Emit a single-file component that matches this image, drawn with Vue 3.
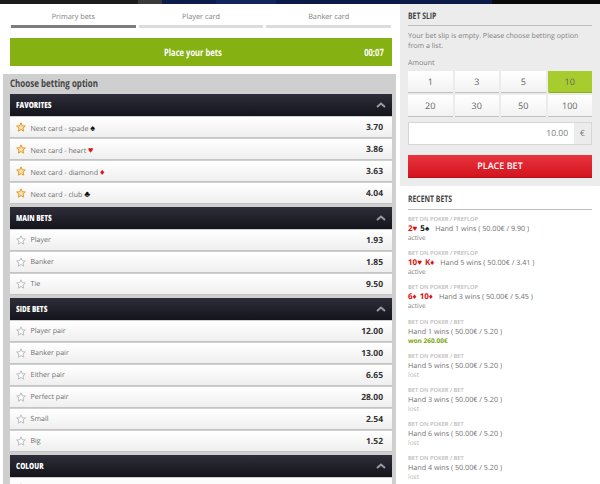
<script setup>
const tabs = ['Primary bets', 'Player card', 'Banker card']

const groups = [
  {
    title: 'FAVORITES',
    fav: true,
    rows: [
      { label: 'Next card - spade', suit: '♠', red: false, odd: '3.70' },
      { label: 'Next card - heart', suit: '♥', red: true, odd: '3.86' },
      { label: 'Next card - diamond', suit: '♦', red: true, odd: '3.63' },
      { label: 'Next card - club', suit: '♣', red: false, odd: '4.04' }
    ]
  },
  {
    title: 'MAIN BETS',
    rows: [
      { label: 'Player', odd: '1.93' },
      { label: 'Banker', odd: '1.85' },
      { label: 'Tie', odd: '9.50' }
    ]
  },
  {
    title: 'SIDE BETS',
    rows: [
      { label: 'Player pair', odd: '12.00' },
      { label: 'Banker pair', odd: '13.00' },
      { label: 'Either pair', odd: '6.65' },
      { label: 'Perfect pair', odd: '28.00' },
      { label: 'Small', odd: '2.54' },
      { label: 'Big', odd: '1.52' }
    ]
  },
  { title: 'COLOUR', rows: [{}] }
]

const amounts = [1, 3, 5, 10, 20, 30, 50, 100]

const recent = [
  { type: 'BET ON POKER / PREFLOP', cards: [['2♥', true], ['5♠', false]], text: 'Hand 1 wins ( 50.00€ / 9.90 )', status: 'active' },
  { type: 'BET ON POKER / PREFLOP', cards: [['10♥', true], ['K♦', true]], text: 'Hand 5 wins ( 50.00€ / 3.41 )', status: 'active' },
  { type: 'BET ON POKER / PREFLOP', cards: [['6♦', true], ['10♦', true]], text: 'Hand 3 wins ( 50.00€ / 5.45 )', status: 'active' },
  { type: 'BET ON POKER / BET', cards: [], text: 'Hand 1 wins ( 50.00€ / 5.20 )', status: 'won 260.00€' },
  { type: 'BET ON POKER / BET', cards: [], text: 'Hand 5 wins ( 50.00€ / 5.20 )', status: 'lost' },
  { type: 'BET ON POKER / BET', cards: [], text: 'Hand 3 wins ( 50.00€ / 5.20 )', status: 'lost' },
  { type: 'BET ON POKER / BET', cards: [], text: 'Hand 6 wins ( 50.00€ / 5.20 )', status: 'lost' },
  { type: 'BET ON POKER / BET', cards: [], text: 'Hand 4 wins ( 50.00€ / 5.20 )', status: 'lost' }
]
</script>

<template>
  <div class="page">
    <div class="video-strip"></div>
    <div class="columns">
      <div class="left">
        <div class="tabs">
          <div v-for="(t, i) in tabs" :key="t" class="tab" :class="{ on: i === 0 }">
            <span>{{ t }}</span>
            <i></i>
          </div>
        </div>
        <div class="banner">
          <span class="cond">Place your bets</span>
          <span class="cond timer">00:07</span>
        </div>
        <div class="options">
          <h3><span class="cond">Choose betting option</span></h3>
          <div v-for="g in groups" :key="g.title" class="group">
            <div class="group-head">
              <span class="cond">{{ g.title }}</span>
              <svg width="10" height="6" viewBox="0 0 10 6"><path d="M1 5 L5 1.500 L9 5" fill="none" stroke="#9a9aa2" stroke-width="2" /></svg>
            </div>
            <div v-for="(r, i) in g.rows" :key="i" class="row">
              <svg class="star" width="10" height="10" viewBox="0 0 24 24">
                <path d="M12 2 L15 9 L22.500 9.600 L16.800 14.500 L18.600 22 L12 18 L5.400 22 L7.200 14.500 L1.500 9.600 L9 9 Z"
                  :fill="g.fav ? '#fbe3b0' : '#fff'" :stroke="g.fav ? '#e8962a' : '#bcbcbc'" stroke-width="2.400" />
              </svg>
              <span v-if="r.label" class="row-label">{{ r.label }} <b v-if="r.suit" :class="{ red: r.red }">{{ r.suit }}</b></span>
              <span v-if="r.odd" class="odd">{{ r.odd }}</span>
            </div>
          </div>
        </div>
      </div>

      <div class="right">
        <div class="slip">
          <h4><span class="cond">BET SLIP</span></h4>
          <p>Your bet slip is empty. Please choose betting option from a list.</p>
          <div class="amount-label">Amount</div>
          <div class="amounts">
            <div v-for="a in amounts" :key="a" class="amount" :class="{ active: a === 10 }">{{ a }}</div>
          </div>
          <div class="stake">
            <span class="stake-value">10.00</span>
            <span class="currency">€</span>
          </div>
          <div class="place">PLACE BET</div>
        </div>
        <div class="recent">
          <h4><span class="cond">RECENT BETS</span></h4>
          <div v-for="(b, i) in recent" :key="i" class="bet">
            <div class="bet-type">{{ b.type }}</div>
            <div class="bet-line">
              <b v-for="c in b.cards" :key="c[0]" class="card" :class="{ red: c[1] }">{{ c[0] }}</b>
              <span>{{ b.text }}</span>
            </div>
            <div class="bet-status" :class="{ won: b.status.startsWith('won'), lost: b.status === 'lost' }">{{ b.status }}</div>
          </div>
        </div>
      </div>
    </div>
  </div>
</template>

<style>
html, body {
  margin: 0;
  background: #fff;
  overflow: hidden;
}
</style>

<style scoped>
.page {
  width: 600px;
  height: 484px;
  overflow: hidden;
  font-family: "Open Sans", "Liberation Sans", sans-serif;
  text-rendering: geometricPrecision;
  color: #555;
  background: #fff;
}
.cond {
  display: inline-block;
  transform: scaleX(0.76);
  transform-origin: left center;
  white-space: nowrap;
}
.video-strip {
  height: 4px;
  background: linear-gradient(90deg, #1c1c1c 0 23%, #3a3a3a 23% 27%, #0e1c4c 27% 36%, #10245e 36% 46%, #0c1a48 46% 82%, #0a0a0a 82% 100%);
}
.columns {
  display: flex;
  align-items: flex-start;
}
.left {
  width: 400px;
  flex: none;
}
.tabs {
  display: flex;
  gap: 3px;
  padding: 5px 9px 0 11px;
}
.tab {
  flex: 1;
  text-align: center;
  font-size: 7.300px;
  line-height: 12px;
  color: #808080;
}
.tab span {
  display: block;
  height: 16px;
  padding-top: 2px;
  box-sizing: border-box;
}
.tab i {
  display: block;
  height: 3px;
  background: #dcdcdc;
}
.tab.on i {
  background: #7d7d7d;
}
.banner {
  display: flex;
  align-items: center;
  justify-content: space-between;
  height: 28px;
  margin: 10px 8px 0 10px;
  padding: 0 8px 0 154px;
  background: #86b112;
  color: #fff;
  font-size: 10px;
  font-weight: 700;
}
.banner .timer {
  transform-origin: right center;
}
.options {
  margin: 8px 4px 0 3px;
  padding: 3px 4px 1px 7px;
  background: #cfcfcf;
}
.options h3 {
  margin: 0;
  height: 17px;
  font-size: 10.500px;
  line-height: 15px;
  font-weight: 700;
  color: #444;
}
.group-head {
  display: flex;
  align-items: center;
  justify-content: space-between;
  height: 22px;
  padding: 0 6px 0 6px;
  background: linear-gradient(#2e2e3a, #14141c);
  color: #fff;
  font-size: 8.500px;
  font-weight: 800;
}
.group {
  margin-bottom: 3px;
}
.row {
  display: flex;
  align-items: center;
  height: 20px;
  margin-top: 1px;
  padding: 0 9px 0 5.500px;
  background: linear-gradient(#ffffff, #efefef);
  border-bottom: 1px solid #c4c4c4;
  font-size: 7.100px;
}
.star {
  flex: none;
  margin-right: 5px;
}
.row-label {
  flex: 1;
  color: #707070;
}
.row-label b {
  color: #111;
  font-size: 9px;
}
.row-label b.red {
  color: #e01010;
}
.odd {
  font-weight: 700;
  font-size: 8.500px;
  color: #333;
}
.right {
  width: 200px;
  flex: none;
}
.slip {
  padding: 6px 8px 8px;
  background: #ececec;
  height: 182px;
  box-sizing: border-box;
}
h4 {
  margin: 0;
  height: 15px;
  font-size: 9px;
  line-height: 12px;
  font-weight: 700;
  color: #444;
  border-bottom: 1px solid #bdbdbd;
}
.slip p {
  margin: 5px 0 0;
  font-size: 7.100px;
  line-height: 10px;
  color: #808080;
}
.amount-label {
  margin-top: 7px;
  font-size: 7.100px;
  line-height: 10px;
  color: #808080;
}
.amounts {
  display: grid;
  grid-template-columns: repeat(4, 1fr);
  gap: 2px;
  margin-top: 3px;
}
.amount {
  height: 21px;
  line-height: 21px;
  text-align: center;
  background: linear-gradient(#ffffff, #f2f2f2);
  border-bottom: 1px solid #c0c0c0;
  font-size: 9px;
  color: #666;
}
.amount.active {
  background: #a6cc2e;
  border-bottom-color: #8cae22;
  border-radius: 0 0 0 2px;
}
.stake {
  display: flex;
  height: 23px;
  margin-top: 5px;
  background: #fff;
  border: 1px solid #d6d6d6;
  box-sizing: border-box;
  font-size: 8.500px;
  line-height: 21px;
  color: #777;
}
.stake-value {
  flex: 1;
  text-align: right;
  padding-right: 6px;
}
.currency {
  width: 17px;
  text-align: center;
  background: #ececec;
}
.place {
  height: 23px;
  margin-top: 10px;
  line-height: 22px;
  text-align: center;
  color: #fff;
  font-size: 9px;
  font-weight: 600;
  background: linear-gradient(#e8343f, #d3141f);
  border-bottom: 1px solid #b80f18;
  box-sizing: border-box;
}
.recent {
  padding: 6px 8px 0;
}
.recent h4 {
  height: 17px;
  line-height: 14px;
  margin-bottom: 5px;
}
.bet {
  height: 34.200px;
}
.bet-type {
  font-size: 5.700px;
  line-height: 9px;
  font-weight: 600;
  color: #bbb;
}
.bet-line {
  display: flex;
  gap: 3px;
  font-size: 7.200px;
  line-height: 10px;
  color: #707070;
}
.card {
  font-size: 8px;
  color: #111;
}
.card.red {
  color: #e01010;
}
.card + span {
  margin-left: 3px;
}
.bet-status {
  font-size: 6.500px;
  line-height: 8px;
  color: #777;
}
.bet-status.won {
  color: #7aa40e;
  font-weight: 700;
}
.bet-status.lost {
  color: #b5b5b5;
}
</style>
